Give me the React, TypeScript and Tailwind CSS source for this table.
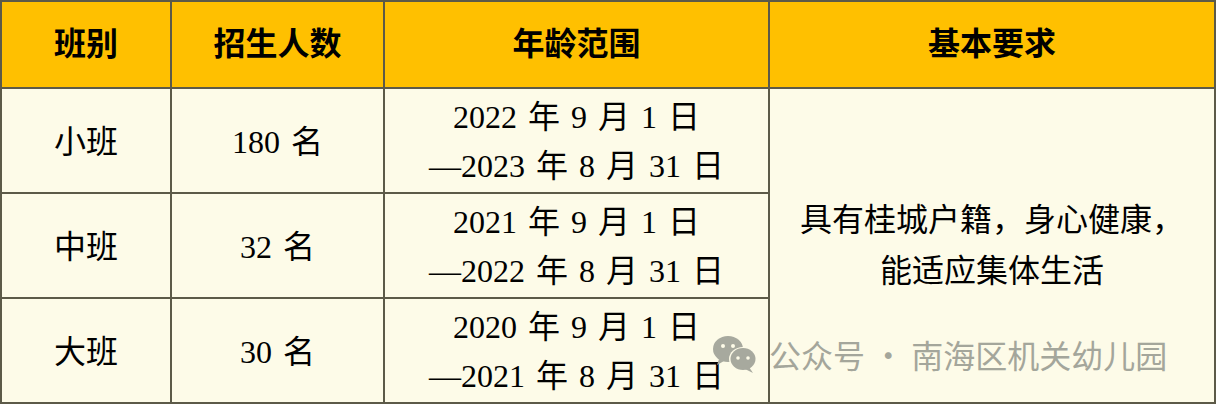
import React from "react";

const font = { fontFamily: '"Liberation Serif", "Noto Sans CJK SC", serif' };

const rows = [
  { name: "小班", count: "180 名", from: "2022 年 9 月 1 日", to: "—2023 年 8 月 31 日" },
  { name: "中班", count: "32 名", from: "2021 年 9 月 1 日", to: "—2022 年 8 月 31 日" },
  { name: "大班", count: "30 名", from: "2020 年 9 月 1 日", to: "—2021 年 8 月 31 日" },
];

function WechatIcon() {
  return (
    <svg width="48" height="40" viewBox="0 0 48 40" fill="none">
      <ellipse cx="17" cy="15" rx="15" ry="13" fill="#a7a99e" />
      <path d="M8 25 L6 31 L13 27 Z" fill="#a7a99e" />
      <circle cx="12" cy="12" r="2" fill="#fdfbe8" />
      <circle cx="22" cy="12" r="2" fill="#fdfbe8" />
      <ellipse cx="32" cy="25" rx="14" ry="12" fill="#fdfbe8" />
      <ellipse cx="32" cy="25" rx="12.5" ry="11" fill="#a7a99e" />
      <path d="M38 33 L42 39 L34 35 Z" fill="#a7a99e" />
      <circle cx="27" cy="24" r="1.8" fill="#fdfbe8" />
      <circle cx="37" cy="24" r="1.8" fill="#fdfbe8" />
    </svg>
  );
}

export default function App() {
  return (
    <div className="relative w-[1217px] h-[405px] bg-white overflow-hidden" style={font}>
      <table className="border-collapse table-fixed w-[1214px] text-[32px] text-black leading-[49px]">
        <colgroup>
          <col className="w-[170px]" />
          <col className="w-[213px]" />
          <col className="w-[385px]" />
          <col className="w-[446px]" />
        </colgroup>
        <thead>
          <tr className="h-[87px] bg-[#ffc000]">
            {["班别", "招生人数", "年龄范围", "基本要求"].map((h) => (
              <th key={h} className="border-2 border-[#5c5a48] font-bold text-center align-middle">
                {h}
              </th>
            ))}
          </tr>
        </thead>
        <tbody className="bg-[#fdfbe8]">
          {rows.map((r, i) => (
            <tr key={r.name} className="h-[105px]">
              <td className="border-2 border-[#5c5a48] text-center align-middle pt-[4px]">{r.name}</td>
              <td className="border-2 border-[#5c5a48] text-center align-middle pt-[4px] [word-spacing:3px]">{r.count}</td>
              <td className="border-2 border-[#5c5a48] text-center align-middle pt-[3px] [word-spacing:3px]">
                <div>{r.from}</div>
                <div>{r.to}</div>
              </td>
              {i === 0 && (
                <td rowSpan={3} className="border-2 border-[#5c5a48] text-center align-middle leading-[51px]">
                  <div>具有桂城户籍，身心健康，</div>
                  <div>能适应集体生活</div>
                </td>
              )}
            </tr>
          ))}
        </tbody>
      </table>
      <div
        className="absolute left-[711px] top-[334px] flex items-center gap-[10px] text-[32px] text-[#a4a69b]"
        style={{ fontFamily: '"Noto Sans CJK SC", sans-serif' }}
      >
        <WechatIcon />
        <span className="leading-none">公众号 · 南海区机关幼儿园</span>
      </div>
    </div>
  );
}
